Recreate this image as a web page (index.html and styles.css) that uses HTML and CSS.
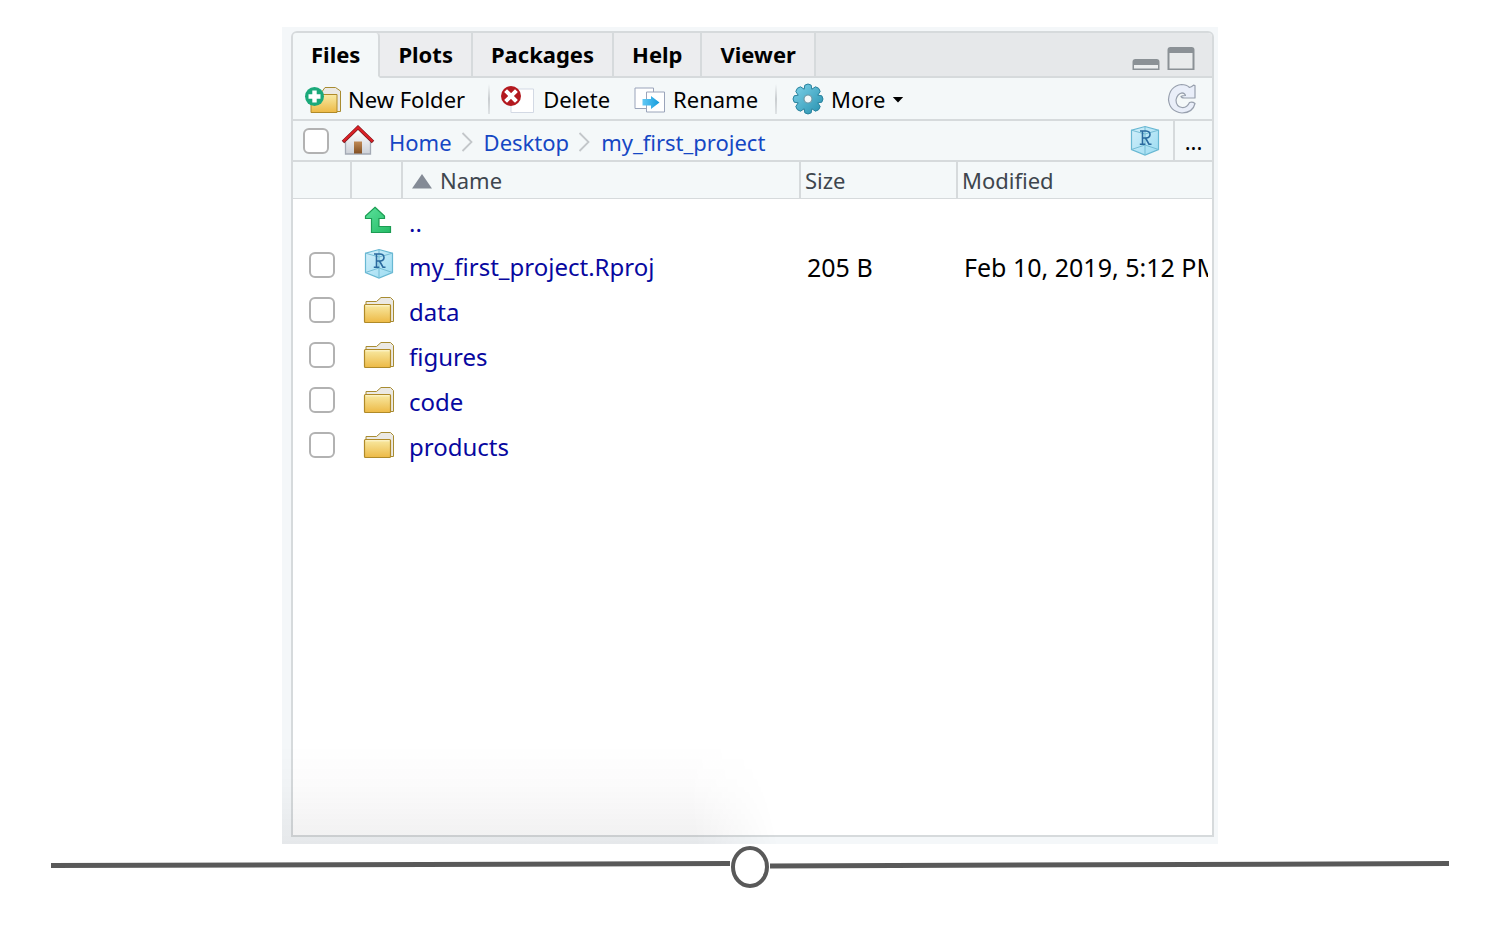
FILE: index.html
```html
<!DOCTYPE html>
<html lang="en">
<head>
<meta charset="utf-8">
<title>Files</title>
<link rel="stylesheet" href="styles.css">
</head>
<body>
<svg class="defs" aria-hidden="true">
  <defs>
    <linearGradient id="gold" x1="0" y1="0" x2="0" y2="1"><stop offset="0" stop-color="#f8eaa4"/><stop offset="1" stop-color="#edb945"/></linearGradient>
    <linearGradient id="cube" x1="0" y1="0" x2="1" y2="1"><stop offset="0" stop-color="#d3effa"/><stop offset="1" stop-color="#9bdcf2"/></linearGradient>
    <linearGradient id="green" x1="0" y1="0" x2="1" y2="1"><stop offset="0" stop-color="#5be29c"/><stop offset="1" stop-color="#25bb66"/></linearGradient>
    <linearGradient id="teal" x1="0" y1="0" x2="1" y2="1"><stop offset="0" stop-color="#7fd3ea"/><stop offset="1" stop-color="#2590ae"/></linearGradient>
    <linearGradient id="wall" x1="0" y1="0" x2="0" y2="1"><stop offset="0" stop-color="#ffffff"/><stop offset="1" stop-color="#cdd1d8"/></linearGradient>
    <linearGradient id="door" x1="0" y1="0" x2="0" y2="1"><stop offset="0" stop-color="#c08a56"/><stop offset="1" stop-color="#824f22"/></linearGradient>
    <linearGradient id="arrow" x1="0" y1="0" x2="1" y2="0"><stop offset="0" stop-color="#63c9f5"/><stop offset="1" stop-color="#149cdc"/></linearGradient>
    <symbol id="folder" viewBox="0 0 32 28">
      <path d="M3 8V5.500h10.500L18 1.500h9.500L30.500 4.500V25.500h-4" fill="#ebe9e4" stroke="#a88c31" stroke-width="1"/>
      <rect x="1.500" y="8.500" width="26" height="18" rx="1" fill="url(#gold)" stroke="#b08a28" stroke-width="1.200"/>
      <path d="M2.500 9.800h24" stroke="#fdf6d0" stroke-width="1"/>
    </symbol>
    <symbol id="rproj" viewBox="0 0 30 32">
      <path d="M15 1.500L28.500 5.200V24.500L15 30 1.500 24.500V5.200Z" fill="url(#cube)" stroke="#68b8d3" stroke-width="1.200"/>
      <path d="M1.500 5.200L15 9 28.500 5.200M15 1.500V30M1.500 24.500L15 20 28.500 24.500" fill="none" stroke="#75bdd5" stroke-width="1"/>
      <path d="M10 6h6q4 .3 4 3.500t-4 3.500h-3.500M12.500 6v13M9.800 19.200h5.500M15.500 13l3.500 6.200H21.500" fill="none" stroke="#2a6a9f" stroke-width="1.600"/>
    </symbol>
  </defs>
</svg>

<main class="frame">
  <section class="pane">
    <header class="tabs">
      <div class="tab-list" role="tablist">
        <button class="tab tab-active" role="tab" aria-selected="true">Files</button>
        <button class="tab" role="tab" aria-selected="false">Plots</button>
        <button class="tab" role="tab" aria-selected="false">Packages</button>
        <button class="tab" role="tab" aria-selected="false">Help</button>
        <button class="tab" role="tab" aria-selected="false">Viewer</button>
      </div>
      <div class="window-buttons">
        <button class="plain" aria-label="Minimize"><svg width="28" height="24" viewBox="0 0 28 24"><path d="M.5 24V16q0-3 3-3h21q3 0 3 3v8Z" fill="#8b9196"/><path d="M2 19h24v3.500H2Z" fill="#eceeef"/></svg></button>
        <button class="plain" aria-label="Maximize"><svg width="28" height="24" viewBox="0 0 28 24"><path d="M.5 24V4q0-3 3-3h21q3 0 3 3v20Z" fill="#8b9196"/><path d="M2.500 7h23v15.500h-23Z" fill="#e9ebec"/></svg></button>
      </div>
    </header>

    <div class="toolbar">
      <button class="tool">
        <svg width="38" height="30" viewBox="0 0 38 30"><path d="M17 9l4-5.500h10.500L36.500 7V27.500H32" fill="#ebe9e4" stroke="#a88c31"/><path d="M7 10.500h26v18H7Z" fill="url(#gold)" stroke="#b08a28"/><circle cx="10.500" cy="12.500" r="9.500" fill="#1ba97a"/><path d="M10.500 6.500v12M4.500 12.500h12" stroke="#fff" stroke-width="4.400"/></svg>
        <span>New Folder</span>
      </button>
      <span class="divider"></span>
      <button class="tool tool-delete">
        <svg width="35" height="30" viewBox="0 0 35 30"><path d="M11 5h22.500v23.500H11Z" fill="#fff" stroke="#d3d9e4"/><circle cx="11" cy="12" r="10" fill="#b3191f"/><path d="M7 8l8 8M15 8l-8 8" stroke="#fff" stroke-width="4" stroke-linecap="square"/></svg>
        <span>Delete</span>
      </button>
      <button class="tool tool-rename">
        <svg width="32" height="28" viewBox="0 0 32 28"><path d="M1 3h18.500v20.500H1Z" fill="#fff" stroke="#9aa4ba"/><path d="M12.500 7h18v20h-18Z" fill="#fff" stroke="#9aa4ba"/><path d="M8.500 14h8.500V11l8.500 6.500-8.500 6.500v-3.500H8.500Z" fill="url(#arrow)"/></svg>
        <span>Rename</span>
      </button>
      <span class="divider"></span>
      <button class="tool tool-more">
        <svg width="32" height="32" viewBox="-16 -16 32 32"><path d="M-3.800-9.800L-3.200-13.800Q0-16.200 3.200-13.800L3.800-9.800 7.500-12.200Q11.500-11.500 12.200-7.500L9.800-3.800 13.800-3.200Q16.200 0 13.800 3.200L9.800 3.800 12.200 7.500Q11.500 11.500 7.500 12.200L3.800 9.800 3.200 13.800Q0 16.200-3.200 13.800L-3.800 9.800-7.500 12.200Q-11.500 11.500-12.200 7.500L-9.800 3.800-13.800 3.200Q-16.200 0-13.800-3.200L-9.800-3.800-12.200-7.500Q-11.500-11.500-7.500-12.200Z" fill="url(#teal)" stroke="#28819c"/><circle r="4" fill="#f4f8f9" stroke="#6b99a8" stroke-width="1.200"/></svg>
        <span>More</span>
        <svg width="12" height="8" viewBox="0 0 12 8"><path d="M.8 2h10.400L6 7.500Z" fill="#000"/></svg>
      </button>
      <button class="plain refresh" aria-label="Refresh"><svg width="30" height="32" viewBox="0 0 30 32"><path d="M22.500 4.500Q25 4 26.500 2.200L28 2.500V15H17.500Q14.500 15 14 13.500 15 12.500 18.500 12.500 18 10 15 9.800 10 11 9 17 9 23.500 15 24.500 20 25 22.500 19.500 25.500 18.500 28 20.500 26 29.500 15 30 2.500 28.500 1.500 16.500 2.500 3 14.500 1.500 19.500 1.500 22.500 4.500Z" fill="#e9eef9" stroke="#98a0ae" stroke-width="1.200" stroke-linejoin="round"/></svg></button>
    </div>

    <nav class="path" aria-label="Path">
      <input class="check" type="checkbox" aria-label="Select all">
      <svg class="house" width="34" height="32" viewBox="0 0 34 32"><path d="M4.500 16L17 4.500 29.500 16V29h-25Z" fill="url(#wall)"/><path d="M4.500 17V29h25V17" fill="none" stroke="#a3a9b4" stroke-width="1.300"/><path d="M13 16.500h8V28.500h-8Z" fill="url(#door)"/><path d="M2 17L17 2.500 32 17" fill="none" stroke="#75151a" stroke-width="3.600"/><path d="M2.400 16.300L17 2.300 31.600 16.300" fill="none" stroke="#d92026" stroke-width="2.400"/></svg>
      <a class="crumb" href="#home">Home</a>
      <svg class="chevron" width="12" height="20" viewBox="0 0 12 20"><path d="M1.500 1L10.500 10 1.500 19" fill="none" stroke="#c3c7ca" stroke-width="1.800"/></svg>
      <a class="crumb" href="#desktop">Desktop</a>
      <svg class="chevron" width="12" height="20" viewBox="0 0 12 20"><path d="M1.500 1L10.500 10 1.500 19" fill="none" stroke="#c3c7ca" stroke-width="1.800"/></svg>
      <a class="crumb" href="#project">my_first_project</a>
      <button class="plain project" aria-label="Project"><svg width="30" height="32"><use href="#rproj"/></svg></button>
      <button class="plain browse">...</button>
    </nav>

    <table class="files">
      <colgroup><col class="col-check"><col class="col-icon"><col><col class="col-size"><col class="col-date"></colgroup>
      <thead>
        <tr>
          <th></th><th></th>
          <th class="sorted"><svg width="20" height="15" viewBox="0 0 20 15"><path d="M10 0L20 14.500H0Z" fill="#848b96"/></svg>Name</th>
          <th>Size</th><th>Modified</th>
        </tr>
      </thead>
      <tbody>
        <tr class="parent">
          <td></td>
          <td class="icon icon-up"><svg width="28" height="28" viewBox="0 0 28 28"><path d="M11 1.200L20.500 10V12.500H15V20.500H26.500V26.500H7.500V12.500H1.500V10Z" fill="url(#green)" stroke="#1c9c53" stroke-width="1.200"/></svg></td>
          <td><a href="#up">..</a></td><td></td><td></td>
        </tr>
        <tr>
          <td><input class="check" type="checkbox" aria-label="Select my_first_project.Rproj"></td>
          <td class="icon icon-project"><svg width="30" height="32"><use href="#rproj"/></svg></td>
          <td><a href="#rproj-file">my_first_project.Rproj</a></td><td class="meta">205 B</td><td class="meta"><div class="clip">Feb 10, 2019, 5:12 PM</div></td>
        </tr>
        <tr>
          <td><input class="check" type="checkbox" aria-label="Select data"></td>
          <td class="icon"><svg width="32" height="28"><use href="#folder"/></svg></td>
          <td><a href="#data">data</a></td><td></td><td></td>
        </tr>
        <tr>
          <td><input class="check" type="checkbox" aria-label="Select figures"></td>
          <td class="icon"><svg width="32" height="28"><use href="#folder"/></svg></td>
          <td><a href="#figures">figures</a></td><td></td><td></td>
        </tr>
        <tr>
          <td><input class="check" type="checkbox" aria-label="Select code"></td>
          <td class="icon"><svg width="32" height="28"><use href="#folder"/></svg></td>
          <td><a href="#code">code</a></td><td></td><td></td>
        </tr>
        <tr>
          <td><input class="check" type="checkbox" aria-label="Select products"></td>
          <td class="icon"><svg width="32" height="28"><use href="#folder"/></svg></td>
          <td><a href="#products">products</a></td><td></td><td></td>
        </tr>
      </tbody>
    </table>
  </section>
  <div class="shade"></div>
</main>

<footer class="timeline" aria-hidden="true">
  <svg class="rule" viewBox="0 0 680 44" preserveAspectRatio="none"><path d="M0 21.500L680 19.500" stroke="#595959" stroke-width="5"/></svg>
  <svg class="ring" viewBox="0 0 40 44"><ellipse cx="20" cy="23" rx="17" ry="19" fill="#fff" stroke="#595959" stroke-width="4"/></svg>
  <svg class="rule" viewBox="0 0 680 44" preserveAspectRatio="none"><path d="M0 22L680 19.500" stroke="#595959" stroke-width="5"/></svg>
</footer>
</body>
</html>
```
FILE: styles.css
```css
* { box-sizing: border-box; }

body {
  margin: 0;
  min-height: 100vh;
  display: flex;
  flex-direction: column;
  align-items: center;
  padding: 27px 0 50px;
  background: #fff;
  color: #000;
  font-family: "Noto Sans", "Open Sans", sans-serif;
  font-size: 24px;
  line-height: 32px;
}

button {
  font: inherit;
  color: inherit;
  border: 0;
  padding: 0;
  background: none;
}

a { text-decoration: none; color: #0808a0; }
svg { display: block; flex: none; }
.defs { position: absolute; width: 0; height: 0; }

.frame {
  position: relative;
  display: flex;
  flex: 1;
  width: 100%;
  max-width: 936px;
  padding: 4px 4px 7px 9px;
  background: #f4f7f9;
}

.pane {
  flex: 1;
  min-width: 0;
  border: 2px solid #d6dadc;
  border-radius: 6px 6px 0 0;
  background: #fff;
  overflow: hidden;
}

.shade {
  position: absolute;
  left: 0;
  bottom: 0;
  width: 500px;
  height: 100px;
  pointer-events: none;
  background: linear-gradient(to bottom, transparent, rgba(10, 0, 10, 0.015) 40%, rgba(10, 0, 10, 0.06));
  mask-image: linear-gradient(80deg, #000 80%, transparent 96%);
}

.tabs {
  display: flex;
  justify-content: space-between;
  height: 45px;
  background: #e6e8ea;
  box-shadow: inset 0 -2px #d6dadc;
}

.tab-list { display: flex; }

.tab {
  padding: 0 18px 2px;
  border-right: 2px solid #d6dadc;
  border-bottom: 2px solid #d6dadc;
  background: #ecedef;
  font-size: 22px;
  font-weight: 700;
}

.tab-active {
  border-bottom-color: #f4f8f9;
  border-radius: 0 4px 0 0;
  background: #f4f8f9;
}

.window-buttons {
  display: flex;
  align-items: center;
  gap: 7px;
  padding: 5px 17px 0 0;
}

.toolbar, .path {
  display: flex;
  align-items: center;
  background: #f4f8f9;
  border-bottom: 2px solid #d6dadc;
}

.toolbar { height: 43px; padding: 0 15px 0 11px; font-size: 22px; }
.path { height: 41px; padding-left: 10px; font-size: 22px; }

.tool { display: flex; align-items: center; gap: 6px; }
.tool-delete { gap: 8px; }
.tool-rename { gap: 7px; margin-left: 24px; }
.tool-more { gap: 7px; }

.divider {
  width: 2px;
  height: 30px;
  margin: 0 10px 0 23px;
  background: linear-gradient(#f4f8f9, #c9cdd0, #dfe3e5);
}

.tool-rename + .divider { margin: 0 15px 0 17px; }
.refresh { margin-left: auto; }

.check {
  appearance: none;
  display: block;
  flex: none;
  width: 26px;
  height: 26px;
  margin: 0;
  border: 2px solid #b2b2b2;
  border-radius: 6px;
  background: #fff;
}

.house { margin: 0 14px 0 12px; }
.crumb { color: #1547c4; padding-top: 2px; }
.chevron { margin: 2px 11px 0 9px; }
.project { margin-left: auto; padding-right: 13px; }

.browse {
  align-self: stretch;
  width: 39px;
  border-left: 2px solid #d6dadc;
}

.files {
  width: 100%;
  border-collapse: separate;
  border-spacing: 0;
  table-layout: fixed;
}

.col-check { width: 59px; }
.col-icon { width: 51px; }
.col-size { width: 157px; }
.col-date { width: 254px; }

th {
  height: 37px;
  padding: 0 4px;
  border-right: 2px solid #d6dadc;
  border-bottom: 1px solid #d6dadc;
  background: #f4f8f9;
  color: #3e464e;
  font-size: 22px;
  font-weight: 400;
  text-align: left;
}

th:last-child { border-right: 0; }
.sorted svg { display: inline-block; margin: 0 8px 0 5px; }

td {
  height: 45px;
  padding: 4px 4px 0 6px;
  vertical-align: middle;
}

.parent td { height: 43px; }
td:first-child { padding: 0 0 0 16px; }
td.icon { padding: 0 0 0 11px; }
td.icon-up, td.icon-project { padding: 0 0 2px 12px; }
.meta { font-size: 25px; }
.clip { overflow: hidden; white-space: nowrap; }

.timeline {
  display: flex;
  width: 100%;
  height: 44px;
  padding: 0 51px;
}

.rule { flex: 1 1 0; min-width: 0; height: 44px; }
.ring { width: 40px; height: 44px; }
```
